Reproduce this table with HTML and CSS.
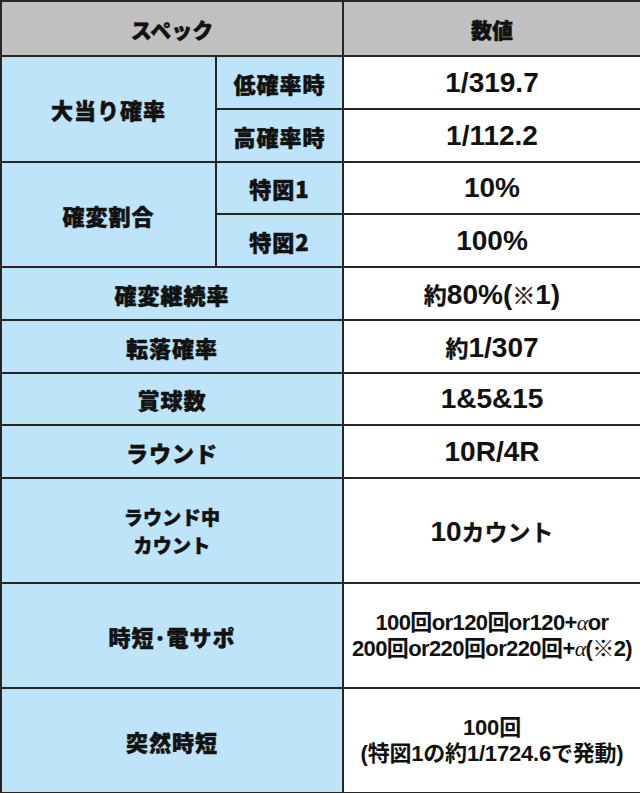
FILE: index.html
```html
<!DOCTYPE html>
<html lang="ja">
<head>
<meta charset="utf-8">
<link rel="stylesheet" href="styles.css">
</head>
<body>
<table class="spec">
  <colgroup>
    <col class="c1">
    <col class="c2">
    <col class="c3">
  </colgroup>
  <thead>
    <tr class="head">
      <th colspan="2">スペック</th>
      <th>数値</th>
    </tr>
  </thead>
  <tbody>
    <tr class="r53">
      <th rowspan="2" class="label">大当り確率</th>
      <th class="label">低確率時</th>
      <td class="num">1/319.7</td>
    </tr>
    <tr class="r53">
      <th class="label">高確率時</th>
      <td class="num">1/112.2</td>
    </tr>
    <tr class="r52">
      <th rowspan="2" class="label">確変割合</th>
      <th class="label">特図1</th>
      <td class="num">10%</td>
    </tr>
    <tr class="r53">
      <th class="label">特図2</th>
      <td class="num">100%</td>
    </tr>
    <tr class="r53">
      <th colspan="2" class="label">確変継続率</th>
      <td class="num"><span class="jp">約</span>80%(<span class="jp">※</span>1)</td>
    </tr>
    <tr class="r53">
      <th colspan="2" class="label">転落確率</th>
      <td class="num"><span class="jp">約</span>1/307</td>
    </tr>
    <tr class="r52">
      <th colspan="2" class="label">賞球数</th>
      <td class="num">1&amp;5&amp;15</td>
    </tr>
    <tr class="r53">
      <th colspan="2" class="label">ラウンド</th>
      <td class="num">10R/4R</td>
    </tr>
    <tr class="r105">
      <th colspan="2" class="label two"><span class="line">ラウンド中</span><span class="line">カウント</span></th>
      <td class="num">10<span class="jp">カウント</span></td>
    </tr>
    <tr class="r105">
      <th colspan="2" class="label">時短･電サポ</th>
      <td class="small">100回or120回or120+<i>α</i>or<br>200回or220回or220回+<i>α</i>(※2)</td>
    </tr>
    <tr class="r105">
      <th colspan="2" class="label">突然時短</th>
      <td class="small wide">100回<br>(特図1の約1/1724.6で発動)</td>
    </tr>
  </tbody>
</table>
</body>
</html>
```

FILE: styles.css
```css
html, body {
  margin: 0;
  padding: 0;
  background: #ffffff;
}

.spec {
  width: 640px;
  border-collapse: collapse;
  table-layout: fixed;
  font-family: "Liberation Sans", "Noto Sans CJK JP", sans-serif;
  font-weight: bold;
  color: #111111;
}

.c1 { width: 215px; }
.c2 { width: 127px; }
.c3 { width: 298px; }

.spec th,
.spec td {
  border: 2px solid #262626;
  padding: 0;
  text-align: center;
  vertical-align: middle;
}

.head th {
  height: 53px;
  background: #c0c0c0;
  font-family: "Noto Sans CJK JP", sans-serif;
  font-size: 21px;
  font-weight: 900;
  -webkit-text-stroke: 0.5px #111111;
}

.label {
  background: #bde4f8;
  font-family: "Noto Sans CJK JP", sans-serif;
  font-size: 22px;
  font-weight: 900;
  letter-spacing: 1px;
  -webkit-text-stroke: 0.5px #111111;
}

.two {
  font-size: 19px;
  letter-spacing: 0.3px;
}

.two .line {
  display: block;
  line-height: 28px;
}

.r53 > * { height: 51px; }
.r52 > * { height: 50px; }
.r105 > * { height: 103px; }

.num {
  font-size: 28px;
  background: #ffffff;
}

.num .jp {
  font-family: "Noto Sans CJK JP", sans-serif;
  font-size: 23px;
  -webkit-text-stroke: 0.3px #111111;
}

.small {
  font-size: 22px;
  line-height: 26px;
  letter-spacing: -0.6px;
  background: #ffffff;
}

.small.wide {
  letter-spacing: -0.2px;
}

.small i {
  font-family: "Liberation Serif", serif;
  font-style: italic;
  font-weight: normal;
}
```
